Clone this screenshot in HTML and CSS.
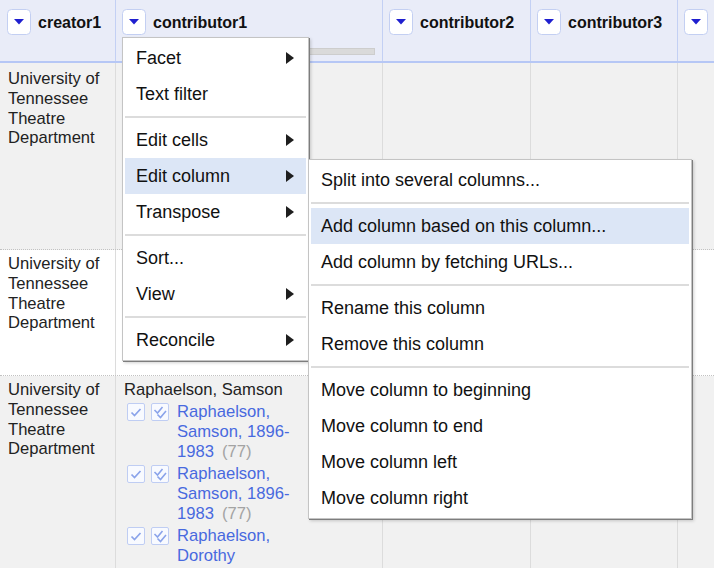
FILE: index.html
```html
<!DOCTYPE html>
<html>
<head>
<meta charset="utf-8">
<title>Data table</title>
<link rel="stylesheet" href="styles.css">
</head>
<body>
<div class="table">
  <div class="hrow">
    <div class="hcell first">
      <div class="htitle">
        <svg class="dd" width="24" height="26" viewBox="0 0 24 26"><rect x="0.5" y="0.5" width="23" height="25" rx="4" fill="#fff" stroke="#c3cff2"/><polygon points="7,10 17,10 12,15.5" fill="#1f1fcf"/></svg>
        <span class="hname">creator1</span>
      </div>
    </div>
    <div class="hcell">
      <div class="htitle">
        <svg class="dd" width="24" height="26" viewBox="0 0 24 26"><rect x="0.5" y="0.5" width="23" height="25" rx="4" fill="#fff" stroke="#c3cff2"/><polygon points="7,10 17,10 12,15.5" fill="#1f1fcf"/></svg>
        <span class="hname">contributor1</span>
      </div>
      <div class="recon-bar"></div>
    </div>
    <div class="hcell">
      <div class="htitle">
        <svg class="dd" width="24" height="26" viewBox="0 0 24 26"><rect x="0.5" y="0.5" width="23" height="25" rx="4" fill="#fff" stroke="#c3cff2"/><polygon points="7,10 17,10 12,15.5" fill="#1f1fcf"/></svg>
        <span class="hname">contributor2</span>
      </div>
    </div>
    <div class="hcell">
      <div class="htitle">
        <svg class="dd" width="24" height="26" viewBox="0 0 24 26"><rect x="0.5" y="0.5" width="23" height="25" rx="4" fill="#fff" stroke="#c3cff2"/><polygon points="7,10 17,10 12,15.5" fill="#1f1fcf"/></svg>
        <span class="hname">contributor3</span>
      </div>
    </div>
    <div class="hcell">
      <div class="htitle">
        <svg class="dd" width="24" height="26" viewBox="0 0 24 26"><rect x="0.5" y="0.5" width="23" height="25" rx="4" fill="#fff" stroke="#c3cff2"/><polygon points="7,10 17,10 12,15.5" fill="#1f1fcf"/></svg>
      </div>
    </div>
  </div>

  <div class="row r1">
    <div class="cell">University of Tennessee Theatre Department</div>
    <div class="cell"></div>
    <div class="cell"></div>
    <div class="cell"></div>
    <div class="cell"></div>
  </div>

  <div class="row r2">
    <div class="cell">University of Tennessee Theatre Department</div>
    <div class="cell"></div>
    <div class="cell"></div>
    <div class="cell"></div>
    <div class="cell"></div>
  </div>

  <div class="row r3">
    <div class="cell">University of Tennessee Theatre Department</div>
    <div class="cell">
      <div class="value">Raphaelson, Samson</div>
      <div class="match">
        <div class="icons">
          <svg width="18" height="18" viewBox="0 0 18 18"><rect x="0.5" y="0.5" width="17" height="17" rx="1.5" fill="#f8faff" stroke="#bfcdf3"/><path d="M4.5 9.5 L7.5 12.5 L13.5 6" fill="none" stroke="#8aa3ea" stroke-width="1.7"/></svg>
          <svg width="18" height="18" viewBox="0 0 18 18"><rect x="0.5" y="0.5" width="17" height="17" rx="1.5" fill="#f8faff" stroke="#bfcdf3"/><path d="M3.5 7 L6.5 10 L11.5 4" fill="none" stroke="#8aa3ea" stroke-width="1.6"/><path d="M6.5 11.5 L9.5 14.5 L15 8" fill="none" stroke="#8aa3ea" stroke-width="1.6"/></svg>
        </div>
        <div class="mtext">Raphaelson,<br>Samson, 1896-<br>1983<span class="count">(77)</span></div>
      </div>
      <div class="match">
        <div class="icons">
          <svg width="18" height="18" viewBox="0 0 18 18"><rect x="0.5" y="0.5" width="17" height="17" rx="1.5" fill="#f8faff" stroke="#bfcdf3"/><path d="M4.5 9.5 L7.5 12.5 L13.5 6" fill="none" stroke="#8aa3ea" stroke-width="1.7"/></svg>
          <svg width="18" height="18" viewBox="0 0 18 18"><rect x="0.5" y="0.5" width="17" height="17" rx="1.5" fill="#f8faff" stroke="#bfcdf3"/><path d="M3.5 7 L6.5 10 L11.5 4" fill="none" stroke="#8aa3ea" stroke-width="1.6"/><path d="M6.5 11.5 L9.5 14.5 L15 8" fill="none" stroke="#8aa3ea" stroke-width="1.6"/></svg>
        </div>
        <div class="mtext">Raphaelson,<br>Samson, 1896-<br>1983<span class="count">(77)</span></div>
      </div>
      <div class="match">
        <div class="icons">
          <svg width="18" height="18" viewBox="0 0 18 18"><rect x="0.5" y="0.5" width="17" height="17" rx="1.5" fill="#f8faff" stroke="#bfcdf3"/><path d="M4.5 9.5 L7.5 12.5 L13.5 6" fill="none" stroke="#8aa3ea" stroke-width="1.7"/></svg>
          <svg width="18" height="18" viewBox="0 0 18 18"><rect x="0.5" y="0.5" width="17" height="17" rx="1.5" fill="#f8faff" stroke="#bfcdf3"/><path d="M3.5 7 L6.5 10 L11.5 4" fill="none" stroke="#8aa3ea" stroke-width="1.6"/><path d="M6.5 11.5 L9.5 14.5 L15 8" fill="none" stroke="#8aa3ea" stroke-width="1.6"/></svg>
        </div>
        <div class="mtext">Raphaelson,<br>Dorothy</div>
      </div>
    </div>
    <div class="cell"></div>
    <div class="cell"></div>
    <div class="cell"></div>
  </div>
</div>

<div class="menu main-menu">
  <div class="item"><span>Facet</span><span class="arrow"></span></div>
  <div class="item"><span>Text filter</span></div>
  <div class="sep"></div>
  <div class="item"><span>Edit cells</span><span class="arrow"></span></div>
  <div class="item active"><span>Edit column</span><span class="arrow"></span></div>
  <div class="item"><span>Transpose</span><span class="arrow"></span></div>
  <div class="sep"></div>
  <div class="item"><span>Sort...</span></div>
  <div class="item"><span>View</span><span class="arrow"></span></div>
  <div class="sep"></div>
  <div class="item"><span>Reconcile</span><span class="arrow"></span></div>
</div>

<div class="menu sub-menu">
  <div class="item"><span>Split into several columns...</span></div>
  <div class="sep"></div>
  <div class="item active"><span>Add column based on this column...</span></div>
  <div class="item"><span>Add column by fetching URLs...</span></div>
  <div class="sep"></div>
  <div class="item"><span>Rename this column</span></div>
  <div class="item"><span>Remove this column</span></div>
  <div class="sep"></div>
  <div class="item"><span>Move column to beginning</span></div>
  <div class="item"><span>Move column to end</span></div>
  <div class="item"><span>Move column left</span></div>
  <div class="item"><span>Move column right</span></div>
</div>
</body>
</html>
```

FILE: styles.css
```css
* {
  box-sizing: border-box;
}

html, body {
  margin: 0;
  padding: 0;
}

body {
  width: 714px;
  height: 568px;
  overflow: hidden;
  position: relative;
  background: #fff;
  color: #222;
  font-family: "Liberation Sans", Arial, Helvetica, sans-serif;
}

.table {
  display: flex;
  flex-direction: column;
  width: max-content;
}

.hrow,
.row {
  display: grid;
  grid-template-columns: 116px 267px 148px 147px 120px;
}

.hrow {
  height: 63px;
  background: #e9ecf8;
  border-bottom: 2px solid #b6c7f5;
}

.hcell {
  display: flex;
  flex-direction: column;
  padding: 9px 7px 0 6px;
  border-right: 1px solid #c3d0f4;
  overflow: hidden;
}

.hcell.first {
  padding-left: 7px;
}

.htitle {
  display: flex;
  align-items: center;
  gap: 7px;
  height: 26px;
}

.dd {
  flex: none;
  display: block;
}

.hname {
  font-weight: bold;
  font-size: 16px;
  color: #111;
  white-space: nowrap;
  padding-top: 1px;
}

.recon-bar {
  margin-top: 13px;
  height: 7px;
  background: #dadada;
  border: 1px solid #cdcdcd;
}

.row {
  border-bottom: 1px dotted #c2c2c2;
}

.r1 {
  height: 187px;
  background: #f1f1f1;
}

.r2 {
  height: 126px;
  background: #fff;
}

.r3 {
  height: 200px;
  background: #f1f1f1;
}

.cell {
  border-right: 1px solid #dcdcdc;
  padding: 4px 8px;
  font-size: 16.6px;
  line-height: 19.8px;
  color: #222;
  overflow: hidden;
}

.r1 .cell {
  padding-top: 6px;
}

.match {
  display: flex;
  margin-top: 2.6px;
}

.icons {
  display: flex;
  gap: 6px;
  padding-left: 3px;
  padding-top: 1px;
  flex: none;
}

.icons svg {
  display: block;
}

.mtext {
  margin-left: 8px;
  color: #4869df;
  white-space: nowrap;
}

.count {
  color: #a3a3a3;
  margin-left: 8px;
}

.menu {
  position: absolute;
  background: #fff;
  border: 1px solid #c4c4c4;
  box-shadow: 1px 1px 0 #7d7d7d, 2px 2px 3px rgba(0, 0, 0, 0.18);
  padding: 2px;
  font-size: 18px;
  color: #111;
}

.main-menu {
  left: 122px;
  top: 37px;
  width: 187px;
}

.sub-menu {
  left: 308px;
  top: 159px;
  width: 384px;
}

.item {
  height: 36px;
  display: flex;
  align-items: center;
  justify-content: space-between;
  padding: 0 12px 0 11px;
  white-space: nowrap;
}

.sub-menu .item {
  padding-left: 10px;
}

.item.active {
  background: #dce6f6;
}

.arrow {
  width: 0;
  height: 0;
  border-left: 8px solid #1e1e1e;
  border-top: 6px solid transparent;
  border-bottom: 6px solid transparent;
}

.sep {
  height: 10px;
  display: flex;
  align-items: center;
}

.sep::before {
  content: "";
  flex: 1;
  height: 2px;
  background: #dcdcdc;
}
```
